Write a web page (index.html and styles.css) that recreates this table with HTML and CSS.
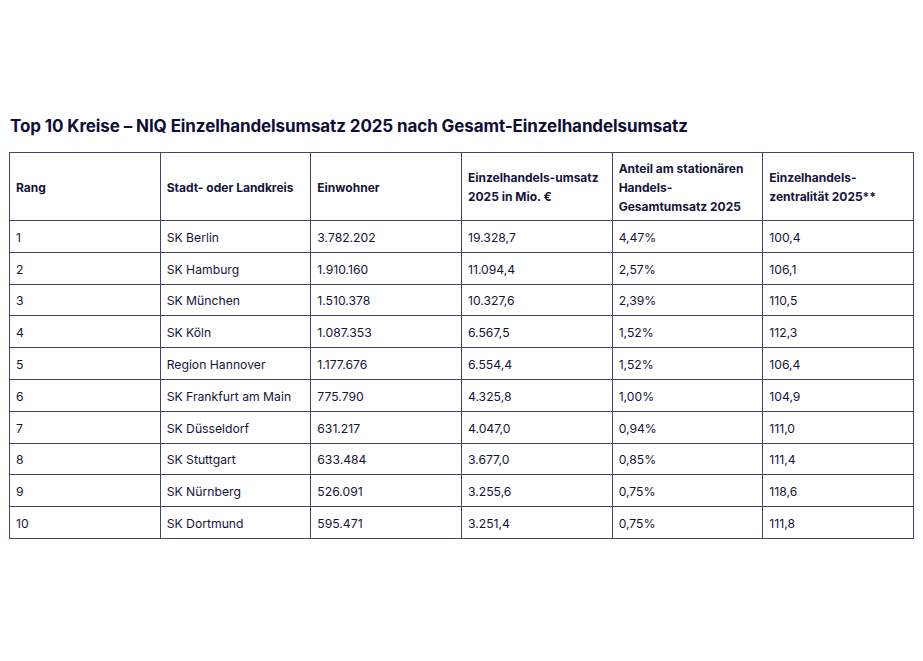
FILE: index.html
```html
<!DOCTYPE html>
<html lang="de">
<head>
<meta charset="utf-8">
<title>Top 10 Kreise</title>
<link rel="stylesheet" href="styles.css">
</head>
<body>
<main class="page">
  <h1 class="title">Top 10 Kreise – NIQ Einzelhandelsumsatz 2025 nach Gesamt-Einzelhandelsumsatz</h1>
  <table class="data">
    <thead>
      <tr>
        <th>Rang</th>
        <th>Stadt- oder Landkreis</th>
        <th>Einwohner</th>
        <th>Einzelhandels-umsatz 2025 in Mio. €</th>
        <th>Anteil am stationären Handels-<br>Gesamtumsatz 2025</th>
        <th>Einzelhandels-<br>zentralität 2025**</th>
      </tr>
    </thead>
    <tbody>
      <tr><td>1</td><td>SK Berlin</td><td>3.782.202</td><td>19.328,7</td><td>4,47%</td><td>100,4</td></tr>
      <tr><td>2</td><td>SK Hamburg</td><td>1.910.160</td><td>11.094,4</td><td>2,57%</td><td>106,1</td></tr>
      <tr><td>3</td><td>SK München</td><td>1.510.378</td><td>10.327,6</td><td>2,39%</td><td>110,5</td></tr>
      <tr><td>4</td><td>SK Köln</td><td>1.087.353</td><td>6.567,5</td><td>1,52%</td><td>112,3</td></tr>
      <tr><td>5</td><td>Region Hannover</td><td>1.177.676</td><td>6.554,4</td><td>1,52%</td><td>106,4</td></tr>
      <tr><td>6</td><td>SK Frankfurt am Main</td><td>775.790</td><td>4.325,8</td><td>1,00%</td><td>104,9</td></tr>
      <tr><td>7</td><td>SK Düsseldorf</td><td>631.217</td><td>4.047,0</td><td>0,94%</td><td>111,0</td></tr>
      <tr><td>8</td><td>SK Stuttgart</td><td>633.484</td><td>3.677,0</td><td>0,85%</td><td>111,4</td></tr>
      <tr><td>9</td><td>SK Nürnberg</td><td>526.091</td><td>3.255,6</td><td>0,75%</td><td>118,6</td></tr>
      <tr><td>10</td><td>SK Dortmund</td><td>595.471</td><td>3.251,4</td><td>0,75%</td><td>111,8</td></tr>
    </tbody>
  </table>
</main>
</body>
</html>
```
FILE: styles.css
```css
* { box-sizing: border-box; }
html, body {
  margin: 0;
  padding: 0;
  background: #ffffff;
}
body {
  font-family: Inter, "Liberation Sans", Arial, sans-serif;
  color: #14143a;
}
.page {
  padding: 114px 10px 0 9px;
}
.title {
  margin: 0 0 14px 1px;
  font-size: 17px;
  line-height: 24px;
  font-weight: 700;
  letter-spacing: -0.1px;
  color: #0e0e36;
}
.data {
  width: 905px;
  border-collapse: collapse;
  table-layout: fixed;
  font-size: 12.2px;
}
.data th, .data td {
  border: 1px solid #45436e;
  text-align: left;
  vertical-align: middle;
  padding: 0 6px;
}
.data th {
  height: 68px;
  font-size: 12px;
  font-weight: 700;
  line-height: 19px;
  padding-top: 1px;
}
.data td {
  height: 31.8px;
  font-weight: 400;
  line-height: 16px;
  padding-top: 3px;
}
```
